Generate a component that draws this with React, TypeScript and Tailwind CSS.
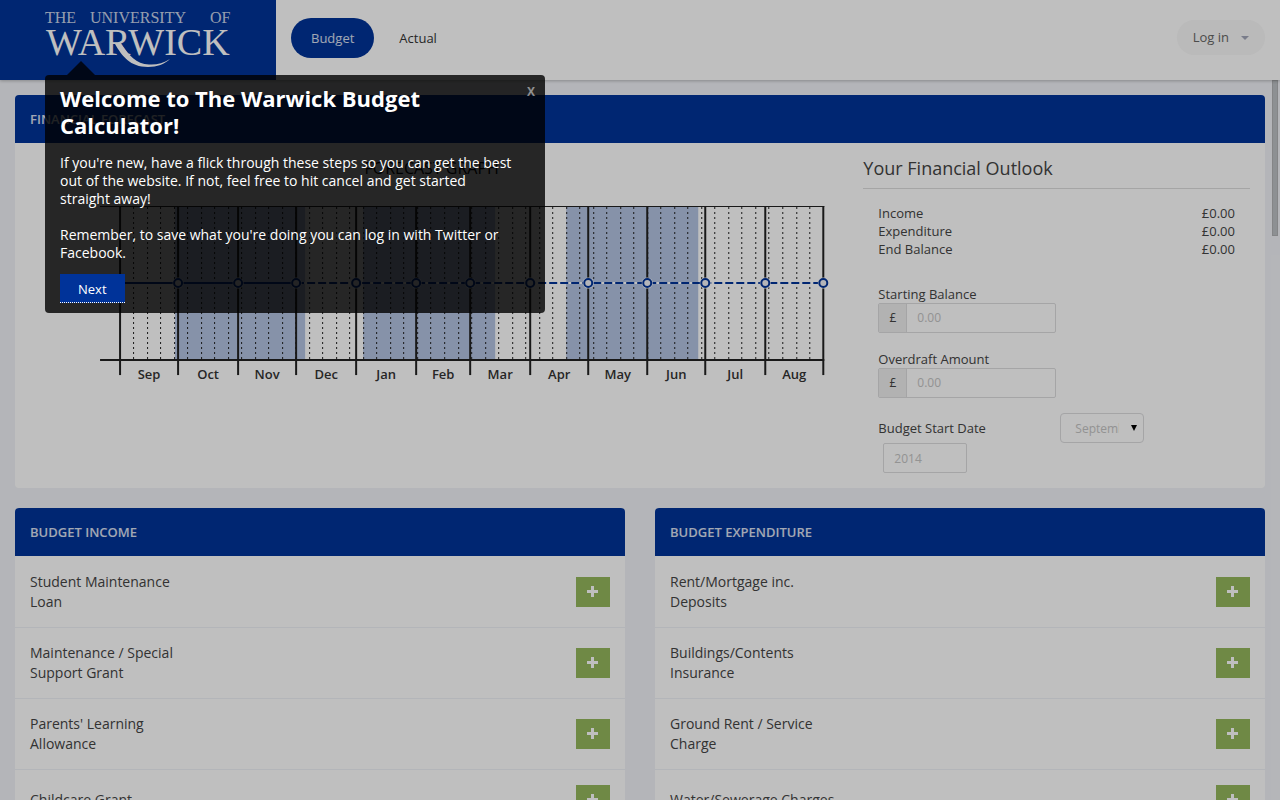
import React from "react";

const MONTHS = ["Sep", "Oct", "Nov", "Dec", "Jan", "Feb", "Mar", "Apr", "May", "Jun", "Jul", "Aug"];
const MONTH_X = [90, 148, 208, 266, 326, 386, 440, 500, 558, 617, 675, 735, 793];
const TERMS = [
  [145, 275],
  [333, 465],
  [536, 668],
];
const WEEKS = Array.from({ length: 51 }, (_, i) => Math.floor(90 + (i + 1) * 13.52) + 0.5);

const INCOME = ["Student Maintenance Loan", "Maintenance / Special Support Grant", "Parents' Learning Allowance", "Childcare Grant"];
const EXPENDITURE = ["Rent/Mortgage inc. Deposits", "Buildings/Contents Insurance", "Ground Rent / Service Charge", "Water/Sewerage Charges"];

function Logo() {
  return (
    <svg viewBox="0 0 276 80" className="h-20 w-[276px]" role="img" aria-label="The University of Warwick">
      <g fill="#fff" fontFamily="'Liberation Serif', serif">
        <g fontSize="16" fillOpacity="0.8">
          <text x="45" y="23">THE</text>
          <text x="90" y="23">UNIVERSITY</text>
          <text x="210" y="23">OF</text>
        </g>
        <text x="46" y="55" fontSize="38">WARWICK</text>
      </g>
      <path d="M115 44C122 56 130 67 148 67C157 67 165 64 170 59C163 63 157 65 149 64.500C136 64 129 55 121 44Z" fill="#fff" />
    </svg>
  );
}

function ForecastGraph() {
  return (
    <svg viewBox="0 0 803 190" className="block w-full" role="img" aria-label="Forecast graph">
      {TERMS.map(([a, b]) => (
        <rect key={a} x={a} y="7" width={b - a} height="152" fill="#b3c3e2" />
      ))}
      {WEEKS.map((x) => (
        <line key={x} x1={x} x2={x} y1="7" y2="159" stroke="#222" strokeDasharray="2 3" />
      ))}
      <line x1="70" x2="794" y1="6.500" y2="6.500" stroke="#222" />
      <line x1="70" x2="794" y1="160" y2="160" stroke="#222" strokeWidth="2" />
      {MONTH_X.map((x) => (
        <line key={x} x1={x} x2={x} y1="6" y2="175" stroke="#222" strokeWidth="2" />
      ))}
      <line x1="266" x2="793" y1="83" y2="83" stroke="#fff" strokeWidth="2" />
      <line x1="90" x2="266" y1="83" y2="83" stroke="#039" strokeWidth="2" />
      <line x1="266" x2="793" y1="83" y2="83" stroke="#039" strokeWidth="2" strokeDasharray="8 3" />
      {MONTH_X.slice(1).map((x) => (
        <g key={x}>
          <circle cx={x} cy="83" r="5.500" fill="#fff" />
          <circle cx={x} cy="83" r="4" fill="#f1f2f7" stroke="#039" strokeWidth="2" />
        </g>
      ))}
      {MONTHS.map((m, i) => (
        <text key={m} x={(MONTH_X[i] + MONTH_X[i + 1]) / 2} y="179" textAnchor="middle" fontSize="13" fontWeight="600" fill="#333">
          {m}
        </text>
      ))}
    </svg>
  );
}

function PanelHeader({ children }: { children: React.ReactNode }) {
  return (
    <h2 className="flex h-12 items-center rounded-t bg-[#003399] px-[15px] pt-0.5 text-[13px] font-semibold uppercase text-white/85">{children}</h2>
  );
}

function Money({ id, label }: { id: string; label: string }) {
  return (
    <div className="flex flex-col">
      <label htmlFor={id} className="leading-[18px]">{label}</label>
      <div className="flex h-[30px] w-[178px] overflow-hidden rounded-xs border border-[#dcdcde]">
        <span className="flex w-7 items-center justify-center border-r border-[#dcdcde] bg-[#eeeeee] text-xs">£</span>
        <input id={id} placeholder="0.00" className="min-w-0 flex-1 px-[10px] text-xs outline-none placeholder:text-[#c4c4c4]" />
      </div>
    </div>
  );
}

function BudgetPanel({ title, items }: { title: string; items: string[] }) {
  return (
    <section className="rounded bg-white">
      <PanelHeader>{title}</PanelHeader>
      <ul className="pt-px">
        {items.map((item) => (
          <li key={item} className="flex items-center justify-between border-b border-[#eff2f7] p-[15px] text-sm leading-5">
            <span className="max-w-[175px]">{item}</span>
            <button aria-label={"Add " + item} className="flex h-[30px] w-[34px] items-center justify-center bg-[#95b75d] pr-px pb-px">
              <svg viewBox="0 0 11 11" className="size-[11px]" aria-hidden="true">
                <path d="M4 0H7V4H11V7H7V11H4V7H0V4H4Z" fill="#fff" />
              </svg>
            </button>
          </li>
        ))}
      </ul>
    </section>
  );
}

export default function App() {
  return (
    <div className="relative flex h-screen flex-col overflow-hidden bg-[#f1f2f7] font-['Open_Sans',sans-serif] text-[13px] text-[#444]">
      <header className="z-10 flex h-20 shrink-0 items-center bg-white shadow-[0_1px_3px_rgba(0,0,0,0.25)]">
        <a href="#home" className="bg-[#003399]"><Logo /></a>
        <nav className="ml-[15px] flex flex-1 items-center gap-[5px] pb-1">
          <a href="#budget" className="flex h-10 items-center rounded-full bg-[#003399] px-5 pt-0.5 text-white/85">Budget</a>
          <a href="#actual" className="flex h-10 items-center rounded-full px-5 pt-0.5 text-[#333]">Actual</a>
        </nav>
        <button className="mr-[15px] mb-[5px] flex h-[35px] items-center gap-3 rounded-full bg-[#f8f8f8] px-4 text-[#666]">
          Log in
          <svg viewBox="0 0 8 4" className="h-1 w-2" aria-hidden="true"><path d="M0 0H8L4 4Z" fill="#a2a6b8" /></svg>
        </button>
      </header>

      <div className="flex min-h-0 flex-1">
        <main className="h-full flex-1 overflow-y-auto py-[15px] pl-[15px] [scrollbar-width:none]">
          <section className="rounded bg-white">
            <PanelHeader>Financial Forecast</PanelHeader>
            <div className="grid grid-cols-[2fr_1fr] pb-[15px]">
              <div className="px-[15px] pt-3">
                <h3 className="pb-[18px] text-center text-base leading-[27px] text-black">FORECAST GRAPH</h3>
                <ForecastGraph />
              </div>
              <div className="px-[15px] pt-3">
                <h3 className="border-b border-[#ddd] pb-1.5 text-lg leading-[27px]">Your Financial Outlook</h3>
                <div className="px-[15px] pt-[15px]">
                  <dl className="grid grid-cols-[1fr_auto] leading-[18px]">
                    <dt>Income</dt><dd>£0.00</dd>
                    <dt>Expenditure</dt><dd>£0.00</dd>
                    <dt>End Balance</dt><dd>£0.00</dd>
                  </dl>
                  <div className="mt-[27px] flex flex-col gap-[17px]">
                    <Money id="starting" label="Starting Balance" />
                    <Money id="overdraft" label="Overdraft Amount" />
                  </div>
                  <div className="mt-[15px] flex items-center">
                    <label htmlFor="month" className="w-[182px] pt-0.5">Budget Start Date</label>
                    <div className="relative h-[30px] w-[84px]">
                      <select id="month" className="h-full w-full appearance-none overflow-hidden rounded border border-[#dcdcde] pt-0.5 pr-6 pl-3.5 text-xs text-[#c4c4c4]">
                        <option>September</option>
                      </select>
                      <svg viewBox="0 0 6 6" className="pointer-events-none absolute top-3 right-[7px] size-1.5" aria-hidden="true"><path d="M0 0H6L3 6Z" fill="#000" /></svg>
                    </div>
                  </div>
                  <input aria-label="Start year" placeholder="2014" className="ml-[5px] block h-[30px] w-[84px] rounded-xs border border-[#dcdcde] px-[10px] text-xs placeholder:text-[#c4c4c4]" />
                </div>
              </div>
            </div>
          </section>
          <div className="mt-5 grid grid-cols-2 gap-[30px]">
            <BudgetPanel title="Budget Income" items={INCOME} />
            <BudgetPanel title="Budget Expenditure" items={EXPENDITURE} />
          </div>
        </main>
        <div className="w-[15px] pl-[7px]">
          <div className="h-[156px] w-1.5 border border-[#b0b2b5] bg-[#bcc0c4]" />
        </div>
      </div>

      <div className="pointer-events-none absolute inset-0 z-20 bg-black/25" />

      <div role="dialog" aria-labelledby="tour-title" className="absolute top-[75px] left-[45px] z-30 w-[500px] rounded bg-black/80 p-[15px] pt-2.5 pb-2.5 text-white">
        <svg viewBox="0 0 28 14" className="absolute -top-3.5 left-[22px] h-3.5 w-7" aria-hidden="true"><path d="M0 14L14 0L28 14Z" fill="#000" fillOpacity="0.8" /></svg>
        <button aria-label="Close" className="absolute top-[9px] right-2.5 text-xs font-bold text-white/50">X</button>
        <h2 id="tour-title" className="pr-20 text-[22px] leading-[27px] font-bold">Welcome to The Warwick Budget Calculator!</h2>
        <p className="mt-[15px] pr-4 text-sm leading-[18px]">If you're new, have a flick through these steps so you can get the best out of the website. If not, feel free to hit cancel and get started straight away!</p>
        <p className="mt-[18px] text-sm leading-[18px]">Remember, to save what you're doing you can log in with Twitter or Facebook.</p>
        <button className="mt-3 flex h-[29px] items-center border-b border-dotted border-white bg-[#003399] px-[18px] pt-[3px] text-[13px]">Next</button>
      </div>
    </div>
  );
}
